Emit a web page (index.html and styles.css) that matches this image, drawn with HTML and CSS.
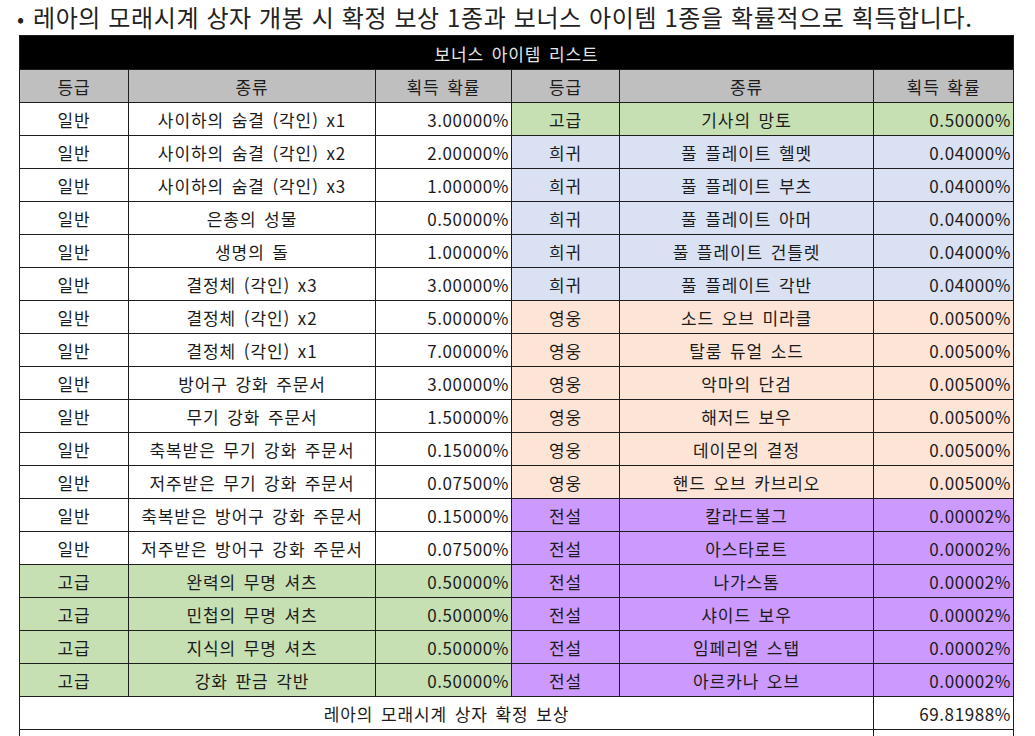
FILE: index.html
```html
<!DOCTYPE html>
<html lang="ko">
<head>
<meta charset="utf-8">
<link rel="stylesheet" href="styles.css">
</head>
<body>
<div class="page">
  <p class="lead"><span class="bullet">•</span>레아의 모래시계 상자 개봉 시 확정 보상 1종과 보너스 아이템 1종을 확률적으로 획득합니다.</p>
  <table class="grid">
    <colgroup>
      <col class="c-grade"><col class="c-name"><col class="c-prob">
      <col class="c-grade2"><col class="c-name2"><col class="c-prob2">
    </colgroup>
    <tr class="title"><td colspan="6">보너스 아이템 리스트</td></tr>
    <tr class="head"><td>등급</td><td>종류</td><td>획득 확률</td><td>등급</td><td>종류</td><td>획득 확률</td></tr>
    <tr><td>일반</td><td>사이하의 숨결 (각인) x1</td><td class="p">3.00000%</td><td class="g">고급</td><td class="g">기사의 망토</td><td class="g p">0.50000%</td></tr>
    <tr><td>일반</td><td>사이하의 숨결 (각인) x2</td><td class="p">2.00000%</td><td class="b">희귀</td><td class="b">풀 플레이트 헬멧</td><td class="b p">0.04000%</td></tr>
    <tr><td>일반</td><td>사이하의 숨결 (각인) x3</td><td class="p">1.00000%</td><td class="b">희귀</td><td class="b">풀 플레이트 부츠</td><td class="b p">0.04000%</td></tr>
    <tr><td>일반</td><td>은총의 성물</td><td class="p">0.50000%</td><td class="b">희귀</td><td class="b">풀 플레이트 아머</td><td class="b p">0.04000%</td></tr>
    <tr><td>일반</td><td>생명의 돌</td><td class="p">1.00000%</td><td class="b">희귀</td><td class="b">풀 플레이트 건틀렛</td><td class="b p">0.04000%</td></tr>
    <tr><td>일반</td><td>결정체 (각인) x3</td><td class="p">3.00000%</td><td class="b">희귀</td><td class="b">풀 플레이트 각반</td><td class="b p">0.04000%</td></tr>
    <tr><td>일반</td><td>결정체 (각인) x2</td><td class="p">5.00000%</td><td class="o">영웅</td><td class="o">소드 오브 미라클</td><td class="o p">0.00500%</td></tr>
    <tr><td>일반</td><td>결정체 (각인) x1</td><td class="p">7.00000%</td><td class="o">영웅</td><td class="o">탈룸 듀얼 소드</td><td class="o p">0.00500%</td></tr>
    <tr><td>일반</td><td>방어구 강화 주문서</td><td class="p">3.00000%</td><td class="o">영웅</td><td class="o">악마의 단검</td><td class="o p">0.00500%</td></tr>
    <tr><td>일반</td><td>무기 강화 주문서</td><td class="p">1.50000%</td><td class="o">영웅</td><td class="o">해저드 보우</td><td class="o p">0.00500%</td></tr>
    <tr><td>일반</td><td>축복받은 무기 강화 주문서</td><td class="p">0.15000%</td><td class="o">영웅</td><td class="o">데이몬의 결정</td><td class="o p">0.00500%</td></tr>
    <tr><td>일반</td><td>저주받은 무기 강화 주문서</td><td class="p">0.07500%</td><td class="o">영웅</td><td class="o">핸드 오브 카브리오</td><td class="o p">0.00500%</td></tr>
    <tr><td>일반</td><td>축복받은 방어구 강화 주문서</td><td class="p">0.15000%</td><td class="v">전설</td><td class="v">칼라드볼그</td><td class="v p">0.00002%</td></tr>
    <tr><td>일반</td><td>저주받은 방어구 강화 주문서</td><td class="p">0.07500%</td><td class="v">전설</td><td class="v">아스타로트</td><td class="v p">0.00002%</td></tr>
    <tr><td class="g">고급</td><td class="g">완력의 무명 셔츠</td><td class="g p">0.50000%</td><td class="v">전설</td><td class="v">나가스톰</td><td class="v p">0.00002%</td></tr>
    <tr><td class="g">고급</td><td class="g">민첩의 무명 셔츠</td><td class="g p">0.50000%</td><td class="v">전설</td><td class="v">샤이드 보우</td><td class="v p">0.00002%</td></tr>
    <tr><td class="g">고급</td><td class="g">지식의 무명 셔츠</td><td class="g p">0.50000%</td><td class="v">전설</td><td class="v">임페리얼 스탭</td><td class="v p">0.00002%</td></tr>
    <tr><td class="g">고급</td><td class="g">강화 판금 각반</td><td class="g p">0.50000%</td><td class="v">전설</td><td class="v">아르카나 오브</td><td class="v p">0.00002%</td></tr>
    <tr><td colspan="5">레아의 모래시계 상자 확정 보상</td><td class="p">69.81988%</td></tr>
    <tr><td colspan="5">레아의 모래시계 상자 보너스 아이템</td><td class="p">30.18012%</td></tr>
  </table>
</div>
</body>
</html>
```
FILE: styles.css
```css
html, body {
  margin: 0;
  padding: 0;
  background: #ffffff;
}
.page {
  padding: 0 0 0 19px;
  font-family: "Noto Sans CJK KR", "Noto Sans", sans-serif;
}
.lead {
  margin: 0;
  height: 35px;
  line-height: 33px;
  font-size: 24px;
  letter-spacing: 0.6px;
  color: #222222;
  white-space: nowrap;
}
.bullet {
  display: inline-block;
  width: 16px;
  margin-left: -2px;
  letter-spacing: 0;
  font-size: 21px;
}
.grid {
  border-collapse: collapse;
  table-layout: fixed;
  width: 995px;
  font-size: 17px;
  letter-spacing: 0.9px;
  word-spacing: 2px;
  color: #1c1c1c;
}
.c-grade { width: 109px; }
.c-name { width: 247px; }
.c-prob { width: 136px; }
.c-grade2 { width: 108px; }
.c-name2 { width: 254px; }
.c-prob2 { width: 140px; }
.grid td {
  border: 1px solid #1e1e1e;
  height: 30px;
  padding: 2px 2px 0 2px;
  text-align: center;
  white-space: nowrap;
  line-height: 20px;
  background: #ffffff;
}
.grid .title td {
  background: #000000;
  color: #e6e6e6;
  height: 31px;
}
.grid .head td {
  background: #bfbfbf;
}
.grid td.p { text-align: right; letter-spacing: 0.6px; }
.grid td.g { background: #c6e0b4; }
.grid td.b { background: #d9e1f2; }
.grid td.o { background: #fce4d6; }
.grid td.v { background: #cc99ff; }
```
